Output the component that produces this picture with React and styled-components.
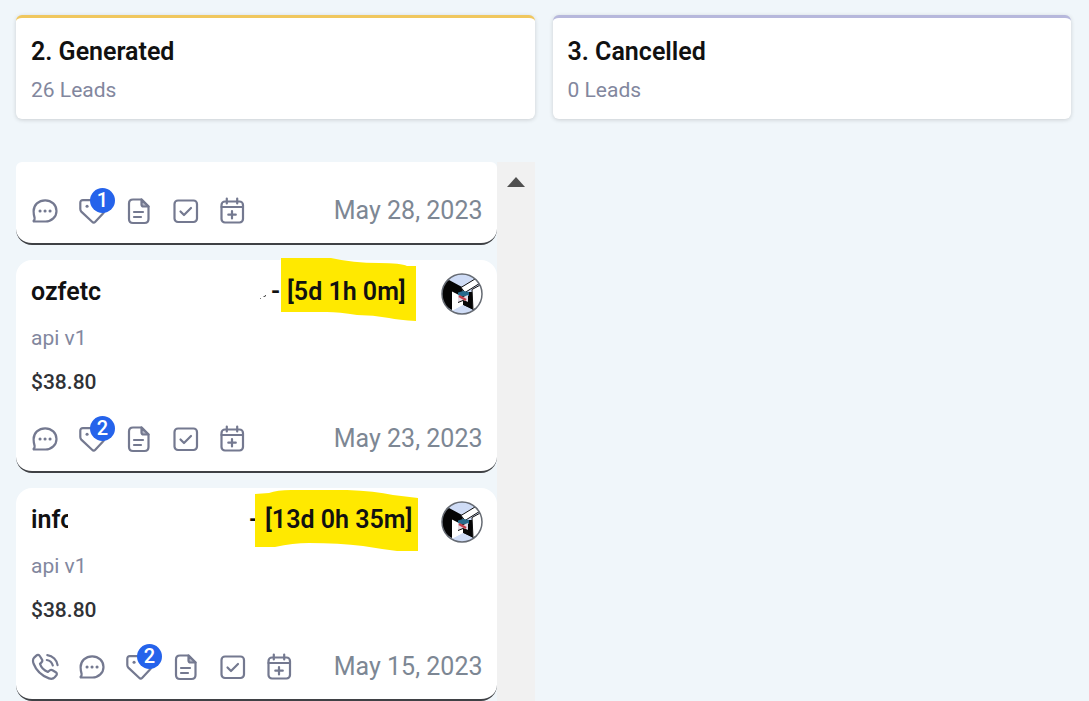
import React from 'react'
import styled, { createGlobalStyle } from 'styled-components'

const lanes = [
  { id: 2, title: '2. Generated', leads: 26, color: '#f0c75e' },
  { id: 3, title: '3. Cancelled', leads: 0, color: '#b7b8dc' },
]

const cards = [
  { id: 1, date: 'May 28, 2023', tags: 1 },
  {
    id: 2,
    name: 'ozfetc',
    shown: 72,
    slot: 240,
    speck: true,
    age: '[5d 1h 0m]',
    source: 'api v1',
    price: '$38.80',
    date: 'May 23, 2023',
    tags: 2,
    mark: { w: 135, h: 64, left: -6, d: 'M0 0H50Q72 5 98 5Q120 5 126 8H135V63Q118 62 108 60Q92 57 76 57Q58 54 46 54H0Z' },
  },
  {
    id: 3,
    name: 'info',
    shown: 37,
    slot: 218,
    age: '[13d 0h 35m]',
    source: 'api v1',
    price: '$38.80',
    date: 'May 15, 2023',
    tags: 2,
    phone: true,
    mark: { w: 163, h: 66, left: -10, d: 'M0 8L14 7Q22 4 36 4H92Q120 5 138 9L163 12V65H142Q126 63 108 60Q84 57 54 57Q38 57 20 61H0Z' },
  },
]

function PhoneIcon() {
  return (
    <Icon>
      <path d="M3.2 4.6 5.3 2.6C6.5 1.5 8 1.8 8.8 3l2.1 3.3c.7 1.1.5 2.2-.4 3.1L9 10.9c1.2 3.7 4 6.5 7.9 8.100l1.7-1.5c.9-.8 1.9-.9 2.9-.3l3.3 2.1c1.3.8 1.4 2.2.4 3.3l-1.5 1.7c-1.300 1.400-3.400 1.900-5.700 1.100C10.600 22.700 5.200 17.500 2.500 10.500c-.8-2.300-.6-4.500.7-5.900Z" />
      <path d="M16.300 2.200c5.500.6 9.700 4.700 10.300 10" />
      <path d="M15.800 7c3.200.6 5.200 2.400 6 5.500" />
    </Icon>
  )
}

function ChatIcon() {
  return (
    <Icon>
      <path d="M2.600 14.200C2.600 8 7.600 3.300 14.200 3.300c6.400 0 11.300 4.700 11.300 10.600s-4.900 10.600-11 10.600H3.200c-.6 0-.8-.5-.4-.9.8-.7 1-1.500.8-2.700-.6-2-1-4-1-6.700Z" />
      <path d="M9 14h.1M14 14h.1M19 14h.1" strokeWidth="3" />
    </Icon>
  )
}

function TagIcon() {
  return (
    <Icon>
      <path d="M2.300 5.800c0-1.800.9-2.700 2.700-2.700h8c1 0 1.800.3 2.500 1L25 13.300c1 1 1 2.200 0 3.200l-7.700 8.300c-1 1-2.200 1-3.200 0L3.300 14.600c-.7-.7-1-1.500-1-2.500Z" />
      <path d="M9 9.200h.1" strokeWidth="3" />
    </Icon>
  )
}

function NoteIcon() {
  return (
    <Icon>
      <path d="M8 2.500h8.500l7 7V22c0 2.500-1.500 4-4 4H8c-2.500 0-4-1.500-4-4V6.500c0-2.500 1.500-4 4-4Z" />
      <path d="M16.500 2.500v5c0 1.300.7 2 2 2h5Z" fill="#b4b7c5" />
      <path d="M9 15h9M9 20h7" />
    </Icon>
  )
}

function TaskIcon() {
  return (
    <Icon>
      <rect x="2.500" y="3.500" width="22.500" height="21.500" rx="3.500" />
      <path d="m8.500 14.500 3.500 3.500 7-7" />
    </Icon>
  )
}

function CalendarIcon() {
  return (
    <Icon>
      <rect x="2.500" y="4.500" width="21.500" height="21" rx="3.500" />
      <path d="M2.500 10H24M7.800 1.500v5M18.200 1.500v5M13 14v7.500M9.300 17.700h7.500" />
    </Icon>
  )
}

function AvatarLogo({ id }) {
  return (
    <Avatar viewBox="0 0 42 42" role="img" aria-label="Owner">
      <clipPath id={id}><circle cx="21" cy="21" r="20" /></clipPath>
      <g clipPath={`url(#${id})`}>
        <rect width="42" height="42" fill="#cfdcf6" />
        <path d="M0 12 8 7l13 7 1 5h10v18l-10-5-11 5L0 31Z" fill="#050505" />
        <path d="M20 14.500 34 6l6 3.500L24 19.500Z" fill="#fff" stroke="#111" />
        <path d="m31 16.500 11-6V31l-10 6Z" fill="#fff" stroke="#111" />
        <path d="m11 18.500 6 3v8.500l5-2v4.500L11 38Z" fill="#fff" />
        <path d="M17 19.500 22 18l6 1v4H17Z" fill="#276a8c" />
        <path d="m17 22 5 2 5-2v7l-5-2-5 2Z" fill="#e4dbe6" />
        <path d="m18 23 7 4" stroke="#c43f4b" strokeWidth="2.500" />
        <path d="m22 28 5 1v5l-5-2Z" fill="#080808" />
        <path d="m11 38 11-6 10 5-5 5H15Z" fill="#cfdcf6" />
      </g>
      <circle cx="21" cy="21" r="20" fill="none" stroke="#666b73" strokeWidth="1.500" />
    </Avatar>
  )
}

function LeadCard({ card }) {
  return (
    <Card $short={!card.name}>
      {card.name && (
        <>
          <CardTop>
            <NameSlot $width={card.slot}>
              <Name $shown={card.shown}>{card.name}</Name>
              {card.speck && (
                <Speck viewBox="0 0 12 12"><path d="m1 11 1-1v1ZM4 9l3-2v1L5 9Z" /></Speck>
              )}
            </NameSlot>
            <Dash>-</Dash>
            <Age>
              <Marker
                $mark={card.mark}
                viewBox={`0 0 ${card.mark.w} ${card.mark.h}`}
                aria-hidden="true"
              >
                <path d={card.mark.d} />
              </Marker>
              <AgeText>{card.age}</AgeText>
            </Age>
            <AvatarLogo id={`owner-${card.id}`} />
          </CardTop>
          <Source>{card.source}</Source>
          <Price>{card.price}</Price>
        </>
      )}
      <CardFooter>
        <Actions>
          {card.phone && <IconButton aria-label="Call"><PhoneIcon /></IconButton>}
          <IconButton aria-label="Conversation"><ChatIcon /></IconButton>
          <IconButton aria-label="Tags">
            <TagIcon />
            <Badge>{card.tags}</Badge>
          </IconButton>
          <IconButton aria-label="Notes"><NoteIcon /></IconButton>
          <IconButton aria-label="Tasks"><TaskIcon /></IconButton>
          <IconButton aria-label="Appointments"><CalendarIcon /></IconButton>
        </Actions>
        <DateText>{card.date}</DateText>
      </CardFooter>
    </Card>
  )
}

export default function App() {
  return (
    <>
      <GlobalStyle />
      <Board>
        {lanes.map((lane) => (
          <Lane key={lane.id}>
            <LaneHeader $color={lane.color}>
              <LaneTitle>{lane.title}</LaneTitle>
              <LaneCount>{lane.leads} Leads</LaneCount>
            </LaneHeader>
            {lane.leads > 0 && (
              <LaneBody>
                <CardList>
                  {cards.map((card) => (
                    <LeadCard key={card.id} card={card} />
                  ))}
                </CardList>
                <ScrollTrack>
                  <ScrollUp aria-label="Scroll up">
                    <svg width="18" height="10" viewBox="0 0 18 10"><path d="M0 10 9 0l9 10Z" fill="#505050" /></svg>
                  </ScrollUp>
                </ScrollTrack>
              </LaneBody>
            )}
          </Lane>
        ))}
      </Board>
    </>
  )
}

const GlobalStyle = createGlobalStyle`
* {
  box-sizing: border-box;
}
body {
  margin: 0;
  background: #f0f6fa;
  font-family: Roboto, "Liberation Sans", sans-serif;
  color: #111;
}
h2, h3, p {
  margin: 0;
}
button {
  padding: 0;
  border: 0;
  background: none;
  cursor: pointer;
}
`
const Board = styled.main`
display: grid;
grid-template-columns: 1fr 1fr;
gap: 18px;
height: 100vh;
padding: 15px 18px 0 16px;
overflow: hidden;
`
const Lane = styled.section`
display: flex;
flex-direction: column;
gap: 43px;
min-width: 0;
min-height: 0;
`
const LaneHeader = styled.header`
padding: 18px 15px 14px;
border-top: 3px solid ${(props) => props.$color};
border-radius: 6px;
background: #fff;
box-shadow: 0 1px 4px rgba(0, 0, 0, 0.16);
`
const LaneTitle = styled.h2`
font-size: 25px;
line-height: 32px;
font-weight: 600;
`
const LaneCount = styled.p`
padding-top: 8px;
font-size: 21px;
line-height: 29px;
color: #82879e;
`
const LaneBody = styled.div`
display: flex;
flex: 1;
min-height: 0;
overflow: hidden;
`
const CardList = styled.div`
display: flex;
flex: 1;
flex-direction: column;
gap: 15px;
min-width: 0;
`
const Card = styled.article`
flex-shrink: 0;
padding: ${(props) => (props.$short ? '34px' : '13px')} 14px 18px 15px;
border-bottom: 2px solid #3f4145;
border-radius: ${(props) => (props.$short ? '6px 6px 16px 16px' : '16px')};
background: #fff;
`
const CardTop = styled.div`
display: flex;
align-items: center;
height: 42px;
font-size: 25px;
line-height: 32px;
font-weight: 600;
`
const NameSlot = styled.div`
display: flex;
flex: 0 0 ${(props) => props.$width}px;
align-items: center;
justify-content: space-between;
`
/* the rest of the name is hidden behind a white block */
const Name = styled.h3`
position: relative;
padding-bottom: 4px;
font-size: 25px;
font-weight: 600;
white-space: nowrap;
&::after {
  content: '';
  position: absolute;
  top: 0;
  bottom: 0;
  left: ${(props) => props.$shown}px;
  width: 60px;
  background: #fff;
}
`
const Speck = styled.svg`
width: 12px;
height: 12px;
`
const Dash = styled.span`
width: 16px;
padding-bottom: 4px;
`
const Age = styled.span`
position: relative;
padding-bottom: 4px;
white-space: nowrap;
`
const AgeText = styled.span`
position: relative;
`
const Marker = styled.svg`
position: absolute;
top: -18px;
left: ${(props) => props.$mark.left}px;
width: ${(props) => props.$mark.w}px;
height: ${(props) => props.$mark.h}px;
fill: #ffe900;
`
const Avatar = styled.svg`
flex-shrink: 0;
width: 42px;
height: 42px;
margin-left: auto;
`
const Source = styled.p`
padding-top: 9px;
font-size: 21px;
line-height: 28px;
color: #82879e;
`
const Price = styled.p`
padding-top: 16px;
font-size: 21px;
line-height: 28px;
font-weight: 500;
color: #303236;
`
const CardFooter = styled.footer`
display: flex;
align-items: center;
justify-content: space-between;
height: 29px;
article > p + & {
  margin-top: 28px;
}
`
const Actions = styled.div`
display: flex;
gap: 19px;
`
const IconButton = styled.button`
position: relative;
display: flex;
width: 28px;
height: 28px;
`
const Icon = styled.svg.attrs({ viewBox: '0 0 28 28', 'aria-hidden': true })`
width: 28px;
height: 28px;
fill: none;
stroke: #747990;
stroke-width: 2.2;
stroke-linecap: round;
stroke-linejoin: round;
`
const Badge = styled.span`
position: absolute;
top: -9px;
left: 12px;
width: 25px;
height: 25px;
border-radius: 50%;
background: #2563eb;
color: #fff;
font-family: Roboto, sans-serif;
font-size: 20px;
line-height: 25px;
font-weight: 500;
text-align: center;
`
const DateText = styled.time`
font-size: 25px;
line-height: 28px;
color: #7d8794;
`
const ScrollTrack = styled.div`
width: 38px;
background: #f1f1f1;
`
const ScrollUp = styled.button`
display: flex;
align-items: center;
justify-content: center;
width: 100%;
height: 40px;
`
